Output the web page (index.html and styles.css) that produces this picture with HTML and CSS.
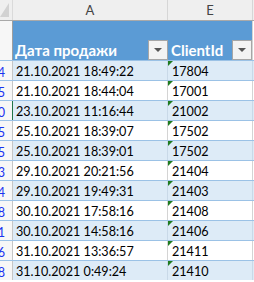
FILE: index.html
```html
<!DOCTYPE html>
<html>
<head>
<meta charset="utf-8">
<link rel="stylesheet" href="styles.css">
</head>
<body>
<div class="sheet">
  <div class="row colhead">
    <div class="rh corner"><span class="tri"></span></div>
    <div class="c a">A</div>
    <div class="c e">E</div>
    <div class="c rest"></div>
  </div>
  <div class="row head">
    <div class="rh"></div>
    <div class="c a"><span class="ht">Дата продажи</span><span class="dd"><span class="arr"></span></span></div>
    <div class="c e"><span class="ht">ClientId</span><span class="dd"><span class="arr"></span></span></div>
    <div class="c rest"></div>
  </div>
  <div class="row band"><div class="rh"><span>14</span></div><div class="c a">21.10.2021 18:49:22</div><div class="c e num">17804</div><div class="c rest"></div></div>
  <div class="row"><div class="rh"><span>15</span></div><div class="c a">21.10.2021 18:44:04</div><div class="c e num">17001</div><div class="c rest"></div></div>
  <div class="row band"><div class="rh sel"><span>20</span></div><div class="c a">23.10.2021 11:16:44</div><div class="c e num">21002</div><div class="c rest"></div></div>
  <div class="row"><div class="rh"><span>25</span></div><div class="c a">25.10.2021 18:39:07</div><div class="c e num">17502</div><div class="c rest"></div></div>
  <div class="row band"><div class="rh"><span>35</span></div><div class="c a">25.10.2021 18:39:01</div><div class="c e num">17502</div><div class="c rest"></div></div>
  <div class="row"><div class="rh"><span>43</span></div><div class="c a">29.10.2021 20:21:56</div><div class="c e num">21404</div><div class="c rest"></div></div>
  <div class="row band"><div class="rh"><span>44</span></div><div class="c a">29.10.2021 19:49:31</div><div class="c e num">21403</div><div class="c rest"></div></div>
  <div class="row"><div class="rh"><span>48</span></div><div class="c a">30.10.2021 17:58:16</div><div class="c e num">21408</div><div class="c rest"></div></div>
  <div class="row band"><div class="rh"><span>51</span></div><div class="c a">30.10.2021 14:58:16</div><div class="c e num">21406</div><div class="c rest"></div></div>
  <div class="row"><div class="rh"><span>56</span></div><div class="c a">31.10.2021 13:36:57</div><div class="c e num">21411</div><div class="c rest"></div></div>
  <div class="row band"><div class="rh"><span>58</span></div><div class="c a">31.10.2021 0:49:24</div><div class="c e num">21410</div><div class="c rest"></div></div>
</div>
</body>
</html>
```

FILE: styles.css
```css
html, body {
  margin: 0;
  padding: 0;
  background: #ffffff;
  overflow: hidden;
}
.sheet {
  width: 254px;
  height: 282px;
  overflow: hidden;
  font-family: "Lato", "Open Sans", sans-serif;
  font-size: 12.6px;
  color: #000;
}
.row {
  display: flex;
  height: 20px;
  box-sizing: border-box;
  border-top: 1px solid #9bc2e6;
}
.rh {
  flex: none;
  width: 13px;
  border-right: 1px solid #c6c6c6;
  background: #f7f7f7;
  display: flex;
  justify-content: flex-end;
  align-items: flex-end;
  overflow: hidden;
  color: #1a33f0;
  line-height: 15px;
  padding-right: 7px;
  box-sizing: border-box;
}
.rh.sel {
  border-right-color: #217346;
}
.c {
  flex: none;
  box-sizing: border-box;
  display: flex;
  align-items: flex-end;
  line-height: 15px;
  padding: 0 0 1px 3px;
  white-space: nowrap;
  overflow: hidden;
}
.a {
  width: 155px;
  border-right: 1px solid #d4d4d4;
}
.e {
  width: 85px;
  border-right: 1px solid #d4d4d4;
  position: relative;
  padding-left: 4px;
}
.rest {
  flex: 1;
}
.band .c {
  background: #ddebf7;
}
.band .a, .band .e {
  border-right-color: #c9d9e8;
}
.num::before {
  content: "";
  position: absolute;
  left: 0;
  top: 0;
  border-top: 5px solid #1f7a1f;
  border-right: 5px solid transparent;
}

/* column letters */
.colhead {
  height: 21px;
  border-top: none;
  border-bottom: 1px solid #a9a9a9;
  background: #efefef;
}
.colhead .rh {
  background: #efefef;
  border-right: 1px solid #dadada;
  position: relative;
}
.colhead .c {
  justify-content: center;
  align-items: center;
  padding: 0;
  color: #444;
  font-size: 13px;
  border-right-color: #d6d6d6;
  background: #efefef;
}
.colhead .rest {
  border-right: none;
}
.tri {
  position: absolute;
  left: 0;
  top: 3px;
  border-bottom: 14px solid #d2d2d2;
  border-left: 9px solid transparent;
}

/* table header */
.head {
  height: 39px;
  border-top: none;
}
.head .rh {
  border-right-color: #9e9e9e;
}
.head .a, .head .e {
  background: #5b9bd5;
  color: #fff;
  font-weight: bold;
  font-size: 15px;
  justify-content: space-between;
  padding: 0 0 0 2px;
  border-right: none;
}
.head .e {
  padding-left: 3px;
  border-right: 1px solid #d4d4d4;
}
.ht {
  line-height: 17px;
  padding-bottom: 1px;
}
.dd {
  width: 20px;
  height: 20px;
  box-sizing: border-box;
  border: 1px solid #a6a6a6;
  background: #f3f3f3;
  display: flex;
  align-items: center;
  justify-content: center;
  flex: none;
}
.arr {
  border-top: 4px solid #555;
  border-left: 4px solid transparent;
  border-right: 4px solid transparent;
}
```
